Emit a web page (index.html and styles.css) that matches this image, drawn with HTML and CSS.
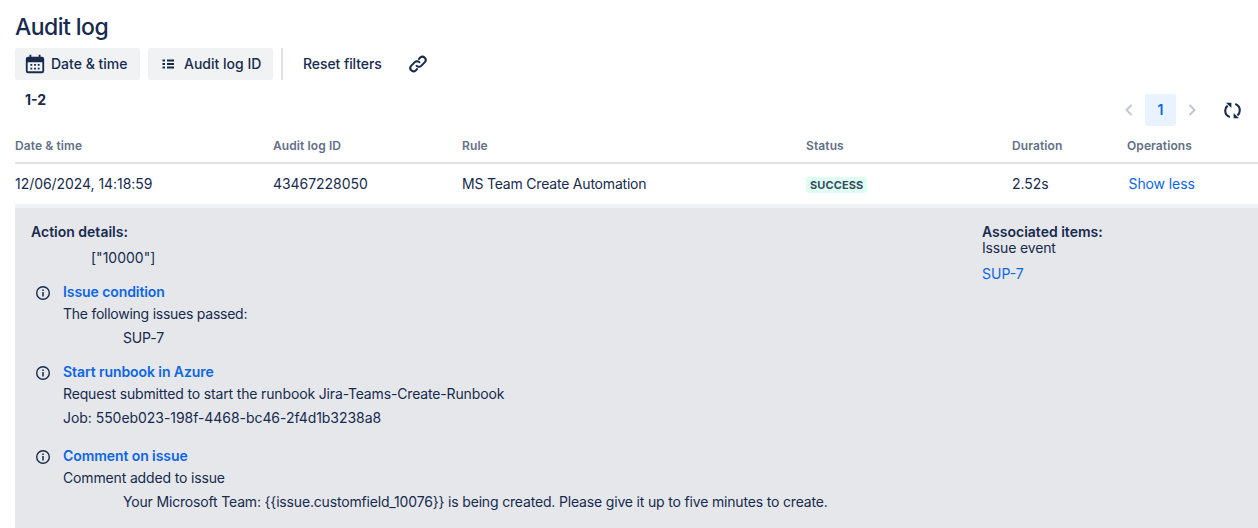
FILE: index.html
```html
<!DOCTYPE html>
<html lang="en">
<head>
<meta charset="utf-8">
<title>Audit log</title>
<link rel="stylesheet" href="styles.css">
</head>
<body>
<main class="page">
  <h1 class="title">Audit log</h1>
  <div class="toolbar">
    <button class="filter filter-date">
      <svg class="icon-cal" viewBox="0 0 24 24"><path fill="#172b4d" fill-rule="evenodd" d="M6 2h2v2h8V2h2v2h1.500A2.500 2.500 0 0 1 22 6.500v13a2.500 2.500 0 0 1-2.500 2.500h-15A2.500 2.500 0 0 1 2 19.500v-13A2.500 2.500 0 0 1 4.500 4H6V2zM4 10v9.500c0 .3.200.500.500.500h15c.3 0 .500-.200.500-.500V10H4zm3 2h2v2H7v-2zm4 0h2v2h-2v-2zm4 0h2v2h-2v-2zm-8 4h2v2H7v-2zm4 0h2v2h-2v-2zm4 0h2v2h-2v-2z"/></svg>
      <span>Date &amp; time</span>
    </button>
    <button class="filter filter-list">
      <svg class="icon24" viewBox="0 0 24 24"><path fill="#172b4d" d="M6.500 7.500H9v2H6.500zM11 7.500h7v2h-7zM6.500 11H9v2H6.500zM11 11h7v2h-7zM6.500 14.500H9v2H6.500zM11 14.500h7v2h-7z"/></svg>
      <span>Audit log ID</span>
    </button>
    <div class="divider"></div>
    <button class="plain">Reset filters</button>
    <svg class="link" viewBox="0 0 24 24"><g fill="none" stroke="#172b4d" stroke-width="2.200" stroke-linecap="round"><path d="M10.500 14a3.500 3.500 0 0 0 5 0l4-4a3.540 3.540 0 0 0-5-5l-1.500 1.500"/><path d="M13.500 10a3.500 3.500 0 0 0-5 0l-4 4a3.540 3.540 0 0 0 5 5l1.500-1.500"/></g></svg>
  </div>
  <div class="meta">
    <span class="count">1-2</span>
    <div class="pager">
      <svg class="chev" viewBox="0 0 16 16"><path d="M10.500 3 5.500 8l5 5" fill="none" stroke="#c1c7d0" stroke-width="2"/></svg>
      <span class="page-num">1</span>
      <svg class="chev" viewBox="0 0 16 16"><path d="M5.500 3l5 5-5 5" fill="none" stroke="#c1c7d0" stroke-width="2"/></svg>
      <svg class="refresh" viewBox="0 0 17 17"><g fill="#172b4d" stroke="#172b4d"><path fill="none" stroke-width="2.100" d="M5.800 15C2.800 14 1.200 11.500 1.200 8.500c0-2 .8-3.500 2.400-4.900"/><path stroke="none" d="M2 .7h5.400v5.400z"/><g transform="rotate(180 8.500 8.500)"><path fill="none" stroke-width="2.100" d="M5.800 15C2.800 14 1.200 11.500 1.200 8.500c0-2 .8-3.500 2.400-4.900"/><path stroke="none" d="M2 .7h5.400v5.400z"/></g></g></svg>
    </div>
  </div>
  <div class="row head">
    <div>Date &amp; time</div><div>Audit log ID</div><div>Rule</div><div>Status</div><div>Duration</div><div>Operations</div>
  </div>
  <div class="row body-row">
    <div>12/06/2024, 14:18:59</div><div>43467228050</div><div class="rule">MS Team Create Automation</div>
    <div><span class="lozenge">Success</span></div><div>2.52s</div><div><a class="link-text show-less">Show less</a></div>
  </div>
  <section class="details">
    <div class="actions">
      <h2 class="heading">Action details:</h2>
      <p class="first">["10000"]</p>

      <div class="action">
        <svg class="info" viewBox="0 0 16 16"><circle cx="8" cy="8" r="6.300" fill="none" stroke="#172b4d" stroke-width="1.400"/><path fill="#172b4d" d="M7.250 7h1.500v4.500h-1.500zM7.250 4.500h1.500V6h-1.500z"/></svg>
        <div>
          <a class="link-text strong">Issue condition</a>
          <p class="line tight">The following issues passed:</p>
          <p class="indent">SUP-7</p>
        </div>
      </div>

      <div class="action">
        <svg class="info" viewBox="0 0 16 16"><circle cx="8" cy="8" r="6.300" fill="none" stroke="#172b4d" stroke-width="1.400"/><path fill="#172b4d" d="M7.250 7h1.500v4.500h-1.500zM7.250 4.500h1.500V6h-1.500z"/></svg>
        <div>
          <a class="link-text strong">Start runbook in Azure</a>
          <p class="line">Request submitted to start the runbook Jira-Teams-Create-Runbook</p>
          <p class="line job">Job: 550eb023-198f-4468-bc46-2f4d1b3238a8</p>
        </div>
      </div>

      <div class="action">
        <svg class="info" viewBox="0 0 16 16"><circle cx="8" cy="8" r="6.300" fill="none" stroke="#172b4d" stroke-width="1.400"/><path fill="#172b4d" d="M7.250 7h1.500v4.500h-1.500zM7.250 4.500h1.500V6h-1.500z"/></svg>
        <div>
          <a class="link-text strong">Comment on issue</a>
          <p class="line">Comment added to issue</p>
          <p class="indent">Your Microsoft Team: {{issue.customfield_10076}} is being created. Please give it up to five minutes to create.</p>
        </div>
      </div>
    </div>
    <aside class="assoc">
      <h2 class="heading">Associated items:</h2>
      <p class="assoc-type">Issue event</p>
      <a class="link-text assoc-link">SUP-7</a>
    </aside>
  </section>
</main>
</body>
</html>
```
FILE: styles.css
```css
* { box-sizing: border-box; }
html, body { margin: 0; height: 100%; overflow: hidden; background: #fff; }
body { font-family: Inter, "Liberation Sans", sans-serif; font-size: 14px; line-height: 20px; color: #172b4d; }
.page { padding-left: 15px; height: 528px; overflow: hidden; }
p { margin: 0; }
.title { margin: 0; padding-top: 12px; height: 48px; font-size: 23px; line-height: 30px; font-weight: 500; letter-spacing: -0.55px; }
.toolbar { display: flex; align-items: center; height: 32px; }
.filter { display: flex; align-items: center; width: 125px; height: 32px; border: 0; border-radius: 3px; background: #f1f2f4; color: #172b4d; font: 500 14px/20px Inter, sans-serif; }
.filter-date { gap: 5px; padding: 0 0 0 9px; }
.filter-list { margin-left: 8px; gap: 4px; padding: 0 0 0 8px; }
.icon24 { width: 24px; height: 24px; flex: none; }
.icon-cal { width: 22px; height: 22px; flex: none; }
.divider { width: 2px; height: 32px; background: #dfe1e6; margin: 0 12px 0 8px; }
.plain { border: 0; background: none; padding: 0 8px; height: 32px; color: #172b4d; font: 500 14px/20px Inter, sans-serif; letter-spacing: -0.08px; }
.link { margin-left: 17px; width: 22px; height: 22px; }
.meta { display: flex; justify-content: space-between; height: 46px; }
.count { padding: 10px 0 0 10px; font-weight: 700; font-size: 14px; line-height: 20px; }
.pager { display: flex; align-items: center; height: 32px; margin-top: 14px; padding-right: 17px; }
.chev { width: 16px; height: 16px; }
.page-num { width: 31px; height: 32px; margin: 0 8px; border-radius: 3px; background: #e9f2ff; color: #0c66e4; font-weight: 600; text-align: center; line-height: 32px; }
.refresh { width: 17px; height: 17px; margin-left: 24px; }
.row { display: grid; grid-template-columns: 258px 189px 344px 206px 115px 1fr; }
.head { height: 38px; padding-top: 12px; font-size: 12px; line-height: 16px; font-weight: 600; letter-spacing: 0.1px; color: #626f86; border-bottom: 2px solid #dfe1e6; }
.body-row { height: 40px; align-items: center; letter-spacing: -0.05px; }
.rule { letter-spacing: -0.2px; }
.lozenge { display: inline-block; padding: 0 4px; height: 16px; border-radius: 3px; background: #dcfff1; font-size: 11px; line-height: 16px; font-weight: 700; letter-spacing: .1px; text-transform: uppercase; color: #3a4a60; vertical-align: middle; }
.link-text { color: #0c66e4; }
.show-less { padding-left: 1.500px; letter-spacing: -0.1px; }
.strong { font-weight: 600; display: block; letter-spacing: -0.08px; }
.details { display: flex; justify-content: space-between; height: 324px; padding: 14px 0 0 16px; background: #e5e7eb; border-top: 4px solid #f1f2f4; }
.heading { margin: 0; font-size: 14px; line-height: 20px; font-weight: 600; }
.actions { flex: 1; }
.first { padding: 6px 0 0 60px; height: 30px; }
.action { display: flex; gap: 12px; padding-left: 4px; margin-top: 14px; }
.first + .action { margin-top: 10px; }
.action:last-child { margin-top: 18px; }
.info { width: 16px; height: 16px; margin-top: 3px; flex: none; }
.line { margin-top: 2px; letter-spacing: -0.15px; }
.tight { letter-spacing: -0.25px; }
.indent { margin-top: 4px; padding-left: 60px; letter-spacing: -0.17px; }
.job { margin-top: 4px; letter-spacing: -0.05px; }
.assoc { width: 276px; }
.assoc-type { margin-top: -4px; letter-spacing: -0.15px; }
.assoc-link { display: block; margin-top: 6px; }
```
